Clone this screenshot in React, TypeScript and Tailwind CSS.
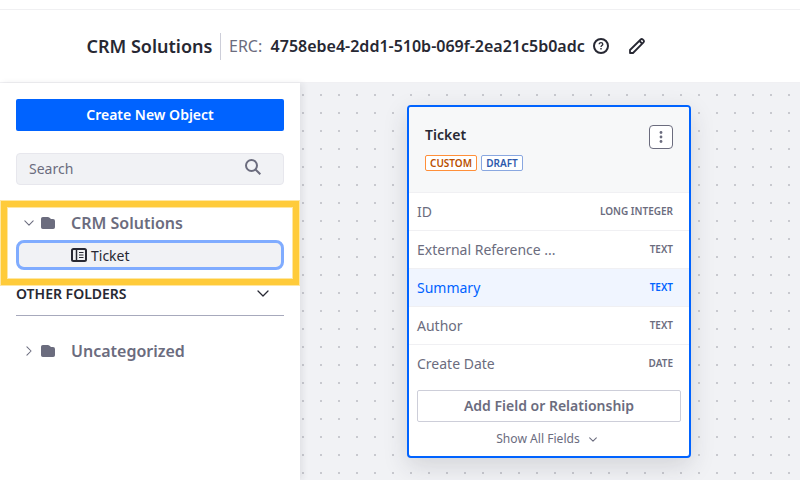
import type { ReactNode } from 'react';

const Folder = () => (
  <svg className="h-[12px] w-[14px] shrink-0" viewBox="0 0 14 12" fill="#6b6c7e">
    <path d="M0 1.8Q0 0 1.8 0H6.8Q7.8 0 8.6 .8L10 2.1H12Q14 2.1 14 4V10.2Q14 12 12.2 12H1.8Q0 12 0 10.2Z" />
  </svg>
);

const Chevron = ({ className, stroke = 1.25 }: { className: string; stroke?: number }) => (
  <svg className={className} viewBox="0 0 12 7" fill="none" stroke="currentColor" strokeWidth={stroke} strokeLinecap="round" strokeLinejoin="round">
    <path d="M1 1l5 5 5-5" />
  </svg>
);

const Tag = ({ className, children }: { className: string; children: ReactNode }) => (
  <span className={`flex h-4 items-center justify-center rounded-[2px] border bg-white text-[10px] font-semibold leading-none ${className}`}>{children}</span>
);

const fields = [
  { name: 'ID', type: 'LONG INTEGER' },
  { name: 'External Reference ...', type: 'TEXT' },
  { name: 'Summary', type: 'TEXT', selected: true },
  { name: 'Author', type: 'TEXT' },
  { name: 'Create Date', type: 'DATE' },
];

function Header() {
  return (
    <header className="h-[83px] border-b border-[#f0f0f3] bg-white">
      <div className="h-[10px] border-b border-[#f0f0f2]" />
      <div className="flex h-[72px] items-center whitespace-nowrap pl-[86.5px]">
        <h1 className="w-[133.5px] text-[18px] font-semibold text-[#272833]">CRM Solutions</h1>
        <div className="h-[27px] w-px bg-[#cdced9]" />
        <span className="w-[41px] pl-2 text-[16px] text-[#6b6c7e]">ERC:</span>
        <span className="ml-[8.6px] w-[322.4px] text-[16px] font-semibold text-[#272833]">4758ebe4-2dd1-510b-069f-2ea21c5b0adc</span>
        <svg className="size-4 shrink-0" viewBox="0 0 16 16" fill="none" stroke="#272833">
          <circle cx="8" cy="8" r="7" strokeWidth="2" />
          <path d="M6.2 6.3C6.2 4.1 9.8 4.1 9.8 6.3C9.8 7.5 8 7.7 8 9" strokeWidth="1.3" />
          <path d="M8 10v1.4" strokeWidth="1.4" />
        </svg>
        <svg className="ml-[20px] size-4 shrink-0" viewBox="0 0 16 16" fill="none" stroke="#272833" strokeWidth="1.8" strokeLinejoin="round">
          <path d="M1 15V12L11.7 1.5Q12.6 .6 13.6 1.3L14.7 2.4Q15.4 3.4 14.5 4.3L4 15Z" />
          <path d="M10.5 3l2.5 2.5" />
        </svg>
      </div>
    </header>
  );
}

function Sidebar() {
  return (
    <aside className="relative z-10 w-[300px] shrink-0 bg-white px-4 pt-4 shadow-[3px_0_6px_rgba(39,40,51,0.08)]">
      <button className="block h-8 w-full rounded-[2px] bg-[#0063ff] pb-[2px] text-[14px] font-semibold text-white">Create New Object</button>
      <div className="mt-[22px] flex h-8 items-center justify-between rounded-[4px] border border-[#e7e7ed] bg-[#f1f2f5] pl-3 pr-[22px]">
        <span className="pb-[2px] text-[14px] text-[#6b6c7e]">Search</span>
        <svg className="mb-1 size-4" viewBox="0 0 16 16" fill="none" stroke="#6b6c7e" strokeWidth="2">
          <circle cx="6.5" cy="6.5" r="5.5" />
          <path d="M10.5 10.5L15.3 15.3" />
        </svg>
      </div>
      <div className="mt-[22px] flex h-8 items-center pl-[8px] text-[#6b6c7e]">
        <Chevron className="h-[6px] w-[10px]" />
        <span className="ml-[7px]"><Folder /></span>
        <span className="ml-4 text-[16px] font-semibold">CRM Solutions</span>
      </div>
      <div className="mt-px flex h-[30px] items-center rounded-[8px] border-[3px] border-[#80acff] bg-[#f1f2f5] pl-[52px] text-[14px] text-[#272833]">
        <svg className="h-[14px] w-4" viewBox="0 0 16 14" fill="none" stroke="#272833">
          <rect x="1" y="1" width="14" height="12" rx="1.5" strokeWidth="2" />
          <path d="M5.5 1v12" strokeWidth="1.5" />
          <path d="M8 4.5h4.5M8 7h4.5M8 9.5h4.5" strokeWidth="1" />
        </svg>
        <span className="ml-1">Ticket</span>
      </div>
      <div className="mt-2 flex h-[38px] items-center justify-between border-b border-[#a7a9bc] pb-[6px] pr-[15px] text-[#272833]">
        <span className="pb-px text-[14px] font-semibold">OTHER FOLDERS</span>
        <Chevron className="h-[7px] w-3" />
      </div>
      <div className="mt-[19px] flex h-8 items-center pl-[8px] text-[#6b6c7e]">
        <Chevron className="h-[6px] w-[10px] -rotate-90" />
        <span className="ml-[7px]"><Folder /></span>
        <span className="ml-4 text-[16px] font-semibold">Uncategorized</span>
      </div>
      <div className="pointer-events-none absolute left-px top-[118px] h-[84px] w-[298px] border-[6px] border-[#ffcb3a] shadow-[0_0_0_1px_#ffe7a3,inset_0_0_0_1px_#ffe7a3]" />
    </aside>
  );
}

function ObjectCard() {
  return (
    <section className="ml-[107px] mt-[22px] h-[353px] w-[284px] overflow-hidden rounded-[4px] border-2 border-[#0063ff] bg-white shadow-[0_8px_24px_rgba(39,40,51,0.15)]">
      <div className="flex h-[86px] justify-between border-b border-[#f0f0f3] bg-[#f7f8f9] pl-4 pr-4">
        <div className="pt-[17px]">
          <h2 className="text-[14px] font-semibold leading-[21px] text-[#272833]">Ticket</h2>
          <div className="mt-[10px] flex gap-1">
            <Tag className="w-[52px] border-[#ff8f39] text-[#b95000]">CUSTOM</Tag>
            <Tag className="w-[42px] border-[#89a7e0] text-[#2e5aac]">DRAFT</Tag>
          </div>
        </div>
        <button className="mt-[18px] flex size-6 items-center justify-center rounded-[4px] border border-[#6b6c7e] bg-white">
          <svg className="size-3" viewBox="0 0 12 12" fill="#6b6c7e">
            <circle cx="6" cy="1.5" r="1.4" /><circle cx="6" cy="6" r="1.4" /><circle cx="6" cy="10.5" r="1.4" />
          </svg>
        </button>
      </div>
      {fields.map((field, i) => (
        <div key={field.name} className={`flex h-[38px] items-center justify-between border-b pl-2 pr-4 ${i < 4 ? 'border-[#f0f0f3]' : 'border-transparent'} ${field.selected ? 'bg-[#f0f5ff] text-[#0063ff]' : 'text-[#6b6c7e]'}`}>
          <span className="text-[14px]">{field.name}</span>
          <span className="text-[10px] font-semibold">{field.type}</span>
        </div>
      ))}
      <button className="mx-2 mt-[7px] block h-8 w-[264px] rounded-[2px] border border-[#cdced9] pb-[2px] text-[14px] font-semibold text-[#6b6c7e]">Add Field or Relationship</button>
      <div className="mt-[7px] flex items-center justify-center gap-[9px] pr-[5px] text-[12.1px] leading-5 text-[#6b6c7e]">
        Show All Fields
        <Chevron className="h-[5px] w-2" stroke={1.6} />
      </div>
    </section>
  );
}

export default function App() {
  return (
    <div className="flex h-[480px] w-[800px] flex-col overflow-hidden bg-white font-['Noto_Sans',sans-serif]">
      <Header />
      <div className="flex min-h-0 flex-1">
        <Sidebar />
        <main className="flex-1 bg-[#f1f2f5] bg-[linear-gradient(to_right,#f1f2f5_2px,transparent_2px,transparent_4px,#f1f2f5_4px),linear-gradient(to_bottom,#f1f2f5_11px,#c8c9cf_11px,#c8c9cf_13px,#f1f2f5_13px)] bg-[size:18px_18px]">
          <ObjectCard />
        </main>
      </div>
    </div>
  );
}
